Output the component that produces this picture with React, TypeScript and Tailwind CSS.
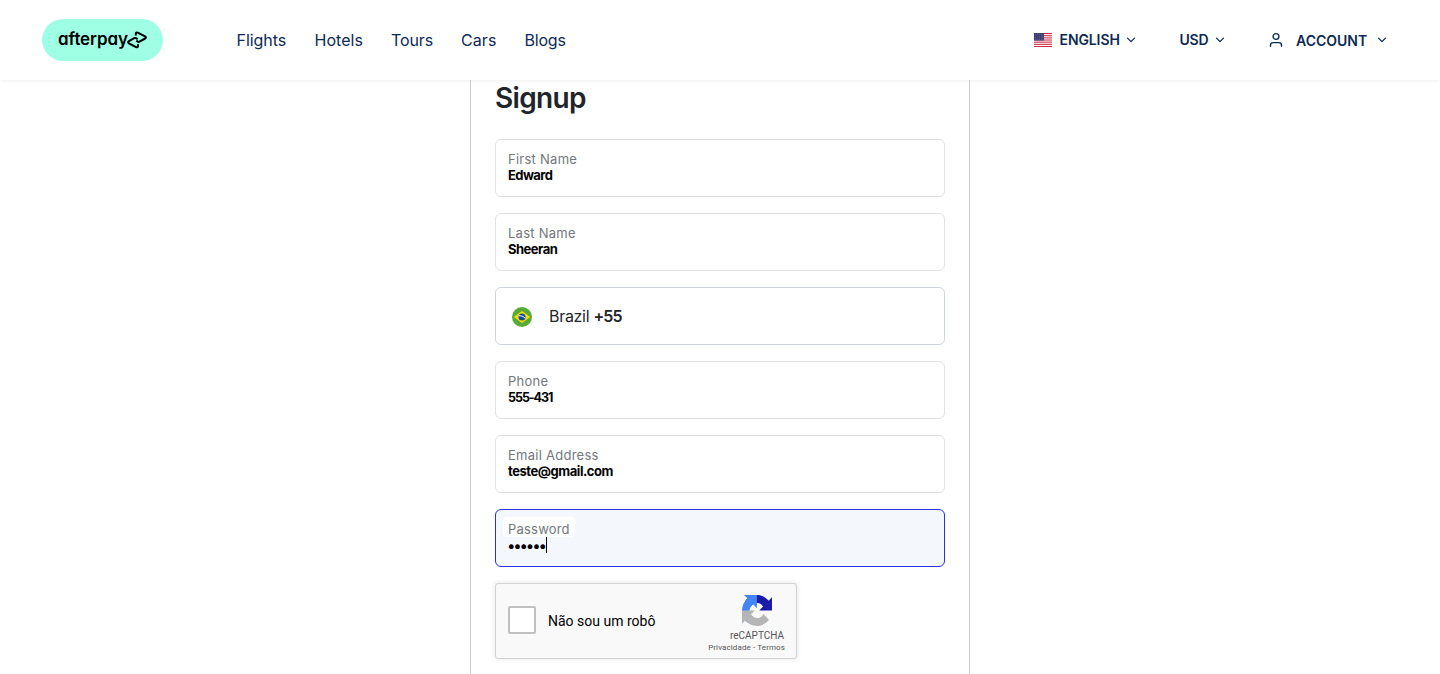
import type { ReactNode } from 'react';

const navItems = [
  { label: 'Flights', className: 'w-[50px] tracking-[-0.05px]' },
  { label: 'Hotels', className: 'w-[48.5px] tracking-[0.05px]' },
  { label: 'Tours', className: 'w-[42px] tracking-[-0.1px]' },
  { label: 'Cars', className: 'w-[35.5px] tracking-[0.1px]' },
  { label: 'Blogs', className: 'w-[42px] tracking-[-0.2px]' },
];

function Chevron() {
  return (
    <svg width="10" height="6" viewBox="0 0 10 6" fill="none" className="shrink-0">
      <path d="M1.5 1.1 5 4.6 8.5 1.1" stroke="#0c2a54" strokeWidth="1.3" strokeLinecap="round" strokeLinejoin="round" />
    </svg>
  );
}

function Logo() {
  return (
    <div className="flex h-[42px] w-[121px] shrink-0 items-center rounded-full bg-[#9fffe4] pl-4">
      <span className="-mt-0.5 w-[69px] shrink-0 whitespace-nowrap text-[17px] font-semibold leading-5 tracking-[-0.1px] text-black [font-feature-settings:'cv11']">
        afterpay
      </span>
      <svg width="20" height="18" viewBox="0 0 20 18" fill="none" className="shrink-0" stroke="#000" strokeWidth="2" strokeLinejoin="round">
        <path d="M8.8 4.4V2.8c0-1.2.9-1.7 1.9-1.2l7.3 3.7c1.2.6 1.2 1.6.1 2.2l-5.6 3.2c-.6.3-1.1.3-1.6 0l-1.6-1" />
        <path d="M11 13.2v1.7c0 1.2-1 1.7-2 1.2l-7-3.7c-1.2-.6-1.2-1.6-.1-2.2l5.3-3.1c.6-.3 1.1-.3 1.7 0l1.8 1" />
      </svg>
    </div>
  );
}

function UsFlag() {
  return (
    <svg width="18" height="14" viewBox="0 0 18 14" className="shrink-0">
      <rect width="18" height="14" fill="#fff" />
      {[0, 2.16, 4.32, 6.48, 8.64, 10.8, 12.96].map((y) => (
        <rect key={y} y={y} width="18" height="1.08" fill="#d02f44" />
      ))}
      <rect width="10" height="7.5" fill="#3c3b6e" />
      {[1.2, 3, 4.8, 6.4].map((y) =>
        [1.2, 3.2, 5.2, 7.2, 9].map((x) => <circle key={`${x}-${y}`} cx={x} cy={y} r="0.35" fill="#aeb0cc" />)
      )}
    </svg>
  );
}

function BrazilFlag() {
  return (
    <svg width="20" height="20" viewBox="0 0 20 20" className="mt-0.5 shrink-0">
      <circle cx="10" cy="10" r="10" fill="#56ab36" />
      <path d="M10 4 18.2 10 10 16 1.8 10Z" fill="#ffda00" />
      <circle cx="10" cy="10" r="3.5" fill="#0b4bab" />
      <path d="M6.8 8.8c2.2-.3 4.7.5 6.3 2.4" stroke="#fff" strokeWidth="1" fill="none" />
    </svg>
  );
}

function Field({ label, value, valueClass = 'text-[13px] leading-4 tracking-[-0.5px]' }: { label: string; value: string; valueClass?: string }) {
  return (
    <div className="flex h-[58px] flex-col rounded-md border border-[#dee2e6] bg-white px-3 pt-[11px]">
      <span className="whitespace-nowrap text-[13px] leading-4 tracking-[0.26px] text-[#73777b]">{label}</span>
      <span className={`whitespace-nowrap font-bold text-black ${valueClass}`}>{value}</span>
    </div>
  );
}

function HeaderLabel({ children, className }: { children: ReactNode; className: string }) {
  return (
    <span className={`shrink-0 whitespace-nowrap text-[14px] font-semibold leading-5 ${className}`}>{children}</span>
  );
}

function Recaptcha() {
  return (
    <div className="flex h-[76px] w-[302px] justify-between rounded-[3px] border border-[#d3d3d3] bg-[#f9f9f9] font-[Roboto,sans-serif] shadow-[0_0_4px_1px_rgba(0,0,0,0.08)]">
      <div className="flex items-center pl-3">
        <div className="mb-[2px] h-7 w-7 rounded-[2px] border-2 border-[#c1c1c1] bg-white" />
        <span className="ml-3 whitespace-nowrap text-[14px] leading-[17px] text-black">Não sou um robô</span>
      </div>
      <div className="flex w-[89px] flex-col items-end pr-[11px] pt-[11px] text-[#555]">
        <svg width="30" height="31" viewBox="0 0 64 64" preserveAspectRatio="none" className="mr-[13px]">
          <path fill="#1c1ca9" d="M64 31.955l-.033-1.37V4.687l-7.16 7.16C50.948 4.674 42.033.093 32.05.093c-10.4 0-19.622 4.96-25.458 12.64l11.736 11.86a15.55 15.55 0 0 1 4.754-5.334c2.05-1.6 4.952-2.906 8.968-2.906.485 0 .86.057 1.135.163 4.976.393 9.288 3.14 11.828 7.124l-8.307 8.307L64 31.953" />
          <path fill="#4285f4" d="M31.862.094l-1.37.033H4.594l7.16 7.16C4.58 13.147 0 22.06 0 32.046c0 10.4 4.96 19.622 12.64 25.458L24.5 45.768a15.55 15.55 0 0 1-5.334-4.754c-1.6-2.05-2.906-4.952-2.906-8.968 0-.485.057-.86.163-1.135.393-4.976 3.14-9.288 7.124-11.828l8.307 8.307L31.86.095" />
          <path fill="#b5b5b5" d="M.001 32.045l.033 1.37v25.898l7.16-7.16c5.86 7.173 14.774 11.754 24.76 11.754 10.4 0 19.622-4.96 25.458-12.64l-11.736-11.86a15.55 15.55 0 0 1-4.754 5.334c-2.05 1.6-4.952 2.906-8.968 2.906-.485 0-.86-.057-1.135-.163-4.976-.393-9.288-3.14-11.828-7.124l8.307-8.307c-10.522.04-22.4.066-27.295-.005" />
        </svg>
        <span className="mr-px mt-1 text-[10px] leading-[11px]">reCAPTCHA</span>
        <span className="mt-[2px] whitespace-nowrap text-[8px] leading-[10px] tracking-[0.1px]">Privacidade&nbsp;-&nbsp;Termos</span>
      </div>
    </div>
  );
}

export default function App() {
  return (
    <div className="flex h-[674px] w-full flex-col overflow-hidden bg-white font-[Inter,sans-serif]">
      <header className="z-10 flex h-20 shrink-0 items-center bg-white pl-[42px] pr-[53px] text-[#0c2a54] shadow-[0_0_4px_rgba(0,0,0,0.1)]">
        <Logo />
        <nav className="ml-[73.5px] flex gap-7 text-[16px] leading-6">
          {navItems.map((item) => (
            <a key={item.label} className={`whitespace-nowrap ${item.className}`}>{item.label}</a>
          ))}
        </nav>
        <div className="ml-auto flex items-center">
          <UsFlag />
          <HeaderLabel className="ml-2 w-[60.5px] tracking-[-0.1px]">ENGLISH</HeaderLabel>
          <span className="ml-[5.5px]"><Chevron /></span>
          <HeaderLabel className="ml-11 w-[29.5px] tracking-[-0.2px]">USD</HeaderLabel>
          <span className="ml-[5.5px]"><Chevron /></span>
          <svg width="14" height="16" viewBox="0 0 14 16" fill="none" stroke="#0c2a54" strokeWidth="1.4" strokeLinecap="round" className="ml-11">
            <circle cx="7" cy="4.5" r="2.9" />
            <path d="M1.5 14.2v-1.1c0-1.6 1.1-2.5 2.6-2.5h5.8c1.5 0 2.6.9 2.6 2.5v1.1" />
          </svg>
          <HeaderLabel className="ml-[13.5px] mt-[2px] w-[72px]">ACCOUNT</HeaderLabel>
          <span className="ml-[9px]"><Chevron /></span>
        </div>
      </header>
      <main className="mx-auto h-[594px] w-[500px] border-x border-[#ced0d2] bg-white px-6">
        <h1 className="h-[59px] whitespace-nowrap text-[28px] font-semibold leading-[37px] tracking-[-0.65px] text-[#212529]">Signup</h1>
        <form className="flex flex-col gap-4">
          <Field label="First Name" value="Edward" valueClass="text-[13px] leading-4 tracking-[-0.6px]" />
          <Field label="Last Name" value="Sheeran" />
          <div className="flex h-[58px] items-center rounded-md border border-[#ced4da] pl-4 text-[16px] tracking-[-0.2px] text-[#212529]">
            <BrazilFlag />
            <span className="ml-[17px] whitespace-nowrap tracking-[-0.3px]">Brazil <b className="font-semibold tracking-[-0.9px]">+55</b></span>
          </div>
          <Field label="Phone" value="555-431" valueClass="text-[12.5px] leading-[18px] tracking-[-1.05px]" />
          <Field label="Email Address" value="teste@gmail.com" valueClass="text-[13px] leading-4 tracking-[-0.45px]" />
          <div className="flex h-[58px] flex-col items-start rounded-md border border-[#2a2fe0] bg-[#f4f7fc] pl-[7px] pt-[7px]">
            <span className="h-5 w-[72px] whitespace-nowrap rounded bg-white pl-[5px] text-[13px] leading-[25px] tracking-[0.2px] text-[#73777b]">Password</span>
            <div className="ml-1 flex h-4 items-center">
              <span className="mt-0.5 w-[39px] whitespace-nowrap text-[15px] leading-4 tracking-[-2.15px] text-black">••••••</span>
              <span className="h-4 w-px bg-black" />
            </div>
          </div>
          <Recaptcha />
        </form>
      </main>
    </div>
  );
}
